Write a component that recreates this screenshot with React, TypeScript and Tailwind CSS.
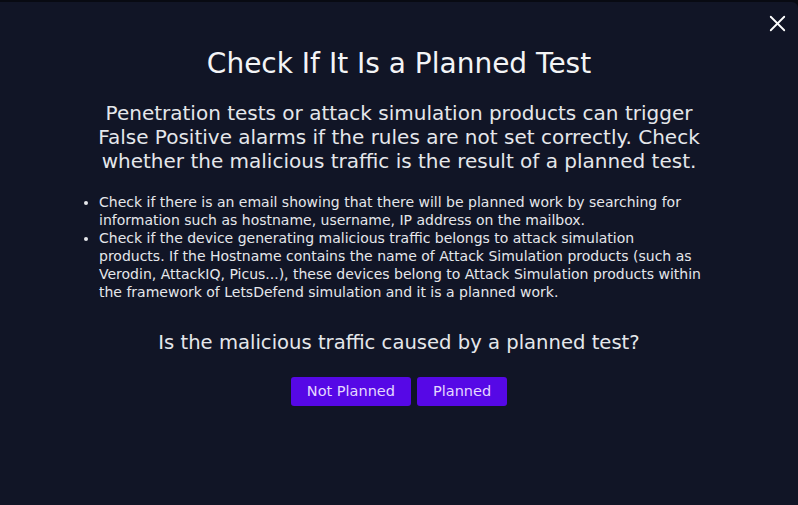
import { X } from 'lucide-react'

const BULLETS = [
  'Check if there is an email showing that there will be planned work by searching for information such as hostname, username, IP address on the mailbox.',
  'Check if the device generating malicious traffic belongs to attack simulation products. If the Hostname contains the name of Attack Simulation products (such as Verodin, AttackIQ, Picus...), these devices belong to Attack Simulation products within the framework of LetsDefend simulation and it is a planned work.',
]

export default function App() {
  return (
    <main
      className="relative w-full h-[505px] overflow-hidden bg-[#080a12]"
      style={{ fontFamily: '"DejaVu Sans", "Noto Sans", sans-serif' }}
    >
      <div className="h-full mt-[2px] rounded-tr-md bg-[#111526] flex flex-col items-center text-[#f3f4f6]">
        <button className="absolute top-[10px] right-[7px] text-white">
          <X size={27} strokeWidth={1.6} />
        </button>

        <h1 className="mt-[44px] text-[28px] leading-[36px] font-normal">Check If It Is a Planned Test</h1>

        <p className="mt-[19px] w-[610px] text-center text-[20px] leading-[24px] text-[#e5e7eb]">
          Penetration tests or attack simulation products can trigger False Positive alarms if the rules are not set
          correctly. Check whether the malicious traffic is the result of a planned test.
        </p>

        <ul className="mt-[20px] w-[624px] ml-[-16px] pl-[20px] list-disc text-[14px] leading-[18px] text-[#e5e7eb]">
          {BULLETS.map((b) => (
            <li key={b}>{b}</li>
          ))}
        </ul>

        <h2 className="mt-[29px] text-[19.6px] leading-[26px] text-[#e5e7eb]">
          Is the malicious traffic caused by a planned test?
        </h2>

        <div className="mt-[21px] flex gap-[6px]">
          <button className="h-[29px] px-[16px] rounded-[3px] bg-[#5608e6] text-[14.5px] text-[#e4d8ff]">
            Not Planned
          </button>
          <button className="h-[29px] px-[16px] rounded-[3px] bg-[#5608e6] text-[14.5px] text-[#e4d8ff]">
            Planned
          </button>
        </div>
      </div>
    </main>
  )
}
